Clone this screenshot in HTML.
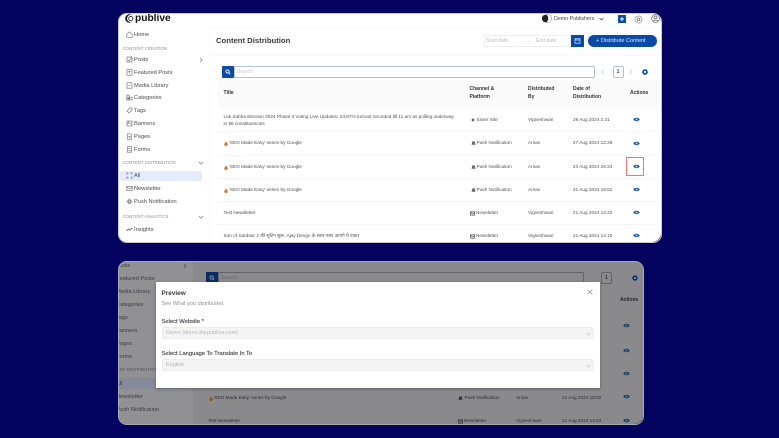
<!DOCTYPE html>
<html><head><meta charset="utf-8">
<style>
html,body{margin:0;padding:0;width:779px;height:438px;overflow:hidden;background:#03035f}
body{position:relative;font-family:"Liberation Sans","Noto Sans CJK SC",sans-serif;color:#333}
.layer{position:absolute;left:0;top:0;width:779px;height:438px;overflow:hidden;filter:blur(.3px)}
.b{position:absolute}
.t{position:absolute;white-space:nowrap;line-height:10px;height:10px}
.m{font-size:5.7px;color:#4a4a52;margin-top:.6px}
.s{font-size:4.2px;color:#8a8a90;letter-spacing:.12px}
.r{font-size:4.7px;color:#4f4f56}
.h{font-size:5px;font-weight:bold;color:#333}
svg{position:absolute;overflow:visible}
.ic{fill:none;stroke:#77777e;stroke-width:.7}
</style></head><body>

<!-- TOP WINDOW -->
<div class="layer" style="clip-path:inset(13px 118px 196px 118px round 9px)">
<div class="b" style="left:118px;top:13px;width:543px;height:229px;background:#fafafc"></div>
<div class="b" style="left:118px;top:13px;width:91px;height:229px;background:#fff"></div>
<div class="b" style="left:118px;top:13px;width:543px;height:14px;background:#fff"></div>
<div class="b" style="left:210px;top:28px;width:451px;height:26px;background:#fff;border-radius:3px 0 0 0"></div>
<div class="b" style="left:210px;top:56px;width:451px;height:186px;background:#fff;border-radius:3px 0 0 0"></div>

<!-- logo -->
<svg style="left:125px;top:14px" width="10" height="9" viewBox="0 0 10 9"><circle cx="4.4" cy="4.5" r="4.2" fill="#111"/><circle cx="5.6" cy="4.5" r="3.6" fill="#fff"/><circle cx="5.8" cy="4.5" r="2.1" fill="none" stroke="#222" stroke-width=".9"/></svg>
<div class="t" style="left:135px;top:12.5px;font-size:10.2px;font-weight:bold;color:#111;line-height:11px;height:11px">publive</div>

<!-- sidebar icons -->
<svg class="ic" style="left:126px;top:31px" width="7" height="7" viewBox="0 0 7 7"><path d="M.8 3.4 3.5.8l2.7 2.6v2.9H.8z"/></svg>
<svg class="ic" style="left:126px;top:56px" width="7" height="7" viewBox="0 0 7 7"><rect x="1" y="1" width="5" height="5"/><path d="M2 4l1 1 3-4"/></svg>
<svg class="ic" style="left:126px;top:69px" width="7" height="7" viewBox="0 0 7 7"><rect x="1" y=".7" width="5" height="5.6"/><path d="M2.3 2.5h2.4M3.5 2.5v2"/></svg>
<svg class="ic" style="left:126px;top:82px" width="7" height="7" viewBox="0 0 7 7"><rect x="1" y=".8" width="5" height="5.4"/><path d="M2.5 3.5h2"/></svg>
<svg class="ic" style="left:126px;top:94px" width="7" height="7" viewBox="0 0 7 7"><path d="M.8 1h2.4v2.4H.8zM3.8 3.2h2.4v2.6H3.8zM.8 4.4h2.2v1.6H.8z"/></svg>
<svg class="ic" style="left:126px;top:107px" width="7" height="7" viewBox="0 0 7 7"><path d="M4 1h2v2L3 6 1 4z"/></svg>
<svg class="ic" style="left:126px;top:120px" width="7" height="7" viewBox="0 0 7 7"><rect x="1" y="1" width="5" height="5"/><path d="M1 4l2-1.5 3 2M2 2h1"/></svg>
<svg class="ic" style="left:126px;top:133px" width="7" height="7" viewBox="0 0 7 7"><path d="M1.3.8h3l1.4 1.500v4H1.3zM2.500 3.500h2.200M2.500 4.800h2.200"/></svg>
<svg class="ic" style="left:126px;top:146px" width="7" height="7" viewBox="0 0 7 7"><rect x="1.3" y=".8" width="4.4" height="5.4"/><path d="M2.5 2.5h2M2.5 4.500h2"/></svg>
<svg class="ic" style="left:126px;top:185px" width="7" height="7" viewBox="0 0 7 7"><rect x=".8" y="1.3" width="5.4" height="4.4"/><path d="M.8 2l2.7 2L6.2 2"/></svg>
<svg class="ic" style="left:126px;top:198px" width="7" height="7" viewBox="0 0 7 7"><path d="M1 3.5 3.5 1 6 3.500 3.500 6z"/><circle cx="3.5" cy="3.5" r=".9"/></svg>
<svg class="ic" style="left:126px;top:226px;stroke:#444" width="7" height="7" viewBox="0 0 7 7"><path d="M.6 5 2.5 3l1.300 1L6.400 2"/></svg>

<div class="b" style="left:120px;top:170.5px;width:82px;height:10.5px;background:#e3ecf8;border-radius:2px"></div>
<svg class="ic" style="left:126px;top:172px;stroke:#4a6ea8" width="7" height="7" viewBox="0 0 7 7"><path d="M1 2.5V1h1.500M4.500 1H6v1.500M1 4.500V6h1.500M4.500 6H6V4.500"/></svg>

<div class="t m" style="left:134px;top:29px">Home</div>
<div class="t s" style="left:122.5px;top:44px">CONTENT CREATION</div>
<div class="t m" style="left:134px;top:54px">Posts</div>
<svg class="ic" style="left:199px;top:57px" width="4" height="6" viewBox="0 0 4 6"><path d="M1 .8 3 3 1 5.2"/></svg>
<div class="t m" style="left:134px;top:67px">Featured Posts</div>
<div class="t m" style="left:134px;top:80px">Media Library</div>
<div class="t m" style="left:134px;top:92.5px">Categories</div>
<div class="t m" style="left:134px;top:105px">Tags</div>
<div class="t m" style="left:134px;top:118px">Banners</div>
<div class="t m" style="left:134px;top:131px">Pages</div>
<div class="t m" style="left:134px;top:144px">Forms</div>
<div class="t s" style="left:122.5px;top:158px">CONTENT DISTRIBUTION</div>
<svg class="ic" style="left:198px;top:161px" width="6" height="4" viewBox="0 0 6 4"><path d="M.8 1 3 3 5.2 1"/></svg>
<div class="t m" style="left:134px;top:170px;color:#33507f">All</div>
<div class="t m" style="left:134px;top:183px">Newsletter</div>
<div class="t m" style="left:134px;top:196px">Push Notification</div>
<div class="t s" style="left:122.5px;top:212px">CONTENT ANALYTICS</div>
<svg class="ic" style="left:198px;top:215px" width="6" height="4" viewBox="0 0 6 4"><path d="M.8 1 3 3 5.2 1"/></svg>
<div class="t m" style="left:134px;top:224.5px">Insights</div>

<!-- topbar -->
<svg style="left:542.500px;top:14px" width="9" height="9" viewBox="0 0 9 9"><circle cx="4.5" cy="4.5" r="4" fill="#fff" stroke="#888" stroke-width=".6"/><path d="M3.5.8a3.8 3.8 0 1 0 0 7.400 4.800 4.800 0 0 0 0-7.400z" fill="#222"/></svg>
<div class="t" style="left:554px;top:13.5px;font-size:5.3px;color:#444">Demo Publishers</div>
<svg class="ic" style="left:599px;top:17px;stroke:#444" width="5" height="4" viewBox="0 0 5 4"><path d="M.6 1 2.500 3 4.400 1"/></svg>
<div class="b" style="left:618px;top:15px;width:8px;height:8px;background:#0c4aa8"></div>
<svg style="left:618px;top:15px" width="8" height="8" viewBox="0 0 8 8"><path d="M4 2v4M2 4h4" stroke="#fff" stroke-width=".9"/></svg>
<svg class="ic" style="left:634px;top:14.5px;stroke:#666" width="9" height="9" viewBox="0 0 9 9"><circle cx="4.5" cy="4.5" r="3.5" stroke-dasharray="1.500 .5"/><circle cx="4.5" cy="4.5" r="1.4"/></svg>
<svg class="ic" style="left:650.5px;top:14px;stroke:#666" width="9" height="9" viewBox="0 0 9 9"><circle cx="4.5" cy="4.5" r="3.9"/><circle cx="4.5" cy="3.5" r="1.5"/><path d="M2 7.300c.6-1.500 4.400-1.500 5 0"/></svg>

<!-- header -->
<div class="t" style="left:216px;top:36px;font-size:7.7px;font-weight:bold;color:#3a3a40">Content Distribution</div>
<div class="b" style="left:484px;top:35px;width:87px;height:12px;background:#fff;border:.5px solid #eceef2;box-sizing:border-box"></div>
<div class="t" style="left:486px;top:36px;font-size:5.1px;color:#bbb">Start date</div>
<div class="t" style="left:526px;top:36px;font-size:5.1px;color:#bbb">→</div>
<div class="t" style="left:536px;top:36px;font-size:5.1px;color:#bbb">End date</div>
<div class="b" style="left:571px;top:35px;width:13px;height:12px;background:#0c4aa8"></div>
<svg style="left:574px;top:38px;fill:none;stroke:#dbe6f5;stroke-width:.7" width="7" height="6" viewBox="0 0 7 6"><rect x="1" y=".8" width="5" height="4.4"/><path d="M1 2h5"/></svg>
<div class="b" style="left:587.5px;top:35px;width:69.5px;height:12px;background:#0c4aa8;border-radius:6px"></div>
<div class="t" style="left:596px;top:36px;font-size:5.6px;color:#dfe8f6">+ Distribute Content</div>

<!-- search -->
<div class="b" style="left:222px;top:66px;width:11.5px;height:12px;background:#0c4aa8;border-radius:1px"></div>
<svg style="left:225px;top:69px;fill:none;stroke:#fff;stroke-width:.9" width="6" height="6" viewBox="0 0 6 6"><circle cx="2.5" cy="2.5" r="1.6"/><path d="M3.8 3.8 5.2 5.2"/></svg>
<div class="b" style="left:234px;top:66px;width:360.5px;height:12px;box-sizing:border-box;border:.8px solid #b4c3da;border-radius:1.5px;background:#fff"></div>
<div class="t" style="left:237px;top:67px;font-size:5px;color:#c6c6cc">Search</div>
<svg class="ic" style="left:601px;top:69px;stroke:#c8c8cf" width="4" height="6" viewBox="0 0 4 6"><path d="M3 .8 1 3 3 5.2"/></svg>
<div class="b" style="left:612.5px;top:66px;width:11px;height:12px;box-sizing:border-box;border:.8px solid #b4c3da;border-radius:2px;background:#fff"></div>
<div class="t" style="left:612.5px;width:11px;text-align:center;top:67px;font-size:5px;font-weight:bold;color:#34456a">1</div>
<svg class="ic" style="left:629px;top:69px;stroke:#c8c8cf" width="4" height="6" viewBox="0 0 4 6"><path d="M1 .8 3 3 1 5.2"/></svg>
<svg style="left:642px;top:68.5px" width="6" height="6" viewBox="0 0 6 6"><circle cx="3" cy="3" r="1.9" fill="none" stroke="#0c4aa8" stroke-width="1.5"/><circle cx="3" cy="3" r="2.6" fill="none" stroke="#0c4aa8" stroke-width=".6" stroke-dasharray=".9 .9"/></svg>

<!-- table header -->
<div class="b" style="left:218px;top:80px;width:439px;height:28px;background:#fafafb"></div>
<div class="t h" style="left:223.5px;top:88px">Title</div>
<div class="t h" style="left:469.5px;top:84px">Channel &amp;</div>
<div class="t h" style="left:469.5px;top:92px">Platform</div>
<div class="t h" style="left:528px;top:84px">Distributed</div>
<div class="t h" style="left:528px;top:92px">By</div>
<div class="t h" style="left:573px;top:84px">Date of</div>
<div class="t h" style="left:573px;top:92px">Distribution</div>
<div class="t h" style="left:630px;top:88px">Actions</div>

<!-- rows -->
<div class="t r" style="left:223.5px;top:111.5px">Lok Sabha Election 2024 Phase 4 Voting Live Updates: 24.87% turnout recorded till 11 am as polling underway</div>
<div class="t r" style="left:223.5px;top:118.5px">in 96 constituencies</div>
<div class="t r" style="left:476.5px;top:114.5px">Sister Site</div>
<div class="t r" style="left:528px;top:114.5px">Vigneshwari</div>
<div class="t r" style="left:573px;top:114.5px">28 Aug 2024 2:31</div>
<svg style="left:470.5px;top:117.5px" width="4" height="4" viewBox="0 0 4 4"><path d="M2 .2 3.8 2 2 3.800.2 2z" fill="#666"/></svg>

<div class="b" style="left:218px;top:131px;width:439px;height:.5px;background:#f5f5f7"></div>
<div class="b" style="left:218px;top:155px;width:439px;height:.5px;background:#f5f5f7"></div>
<div class="b" style="left:218px;top:178px;width:439px;height:.5px;background:#f5f5f7"></div>
<div class="b" style="left:218px;top:201px;width:439px;height:.5px;background:#f5f5f7"></div>
<div class="b" style="left:218px;top:224px;width:439px;height:.5px;background:#f5f5f7"></div>

<svg style="left:224px;top:141px" width="4" height="5" viewBox="0 0 4 5"><path d="M2 .2C2.500 1.500 3.800 2 3.800 3.400A1.800 1.600 0 0 1 .2 3.400C.2 2.200 1.500 1.600 2 .2z" fill="#d9822b"/></svg>
<div class="t r" style="left:229px;top:138px">'SEO Made Easy' series by Google</div>
<svg style="left:470.5px;top:141px" width="5" height="4" viewBox="0 0 5 4"><path d="M1.500.3h2l1 3.400H.5z" fill="#666"/></svg>
<div class="t r" style="left:476.5px;top:138px">Push Notification</div>
<div class="t r" style="left:528px;top:138px">Arnav</div>
<div class="t r" style="left:573px;top:138px">27 Aug 2024 12:29</div>

<svg style="left:224px;top:164.5px" width="4" height="5" viewBox="0 0 4 5"><path d="M2 .2C2.500 1.500 3.800 2 3.800 3.400A1.800 1.600 0 0 1 .2 3.400C.2 2.200 1.500 1.600 2 .2z" fill="#d9822b"/></svg>
<div class="t r" style="left:229px;top:162px">'SEO Made Easy' series by Google</div>
<svg style="left:470.5px;top:164.5px" width="5" height="4" viewBox="0 0 5 4"><path d="M1.500.3h2l1 3.400H.5z" fill="#666"/></svg>
<div class="t r" style="left:476.5px;top:162px">Push Notification</div>
<div class="t r" style="left:528px;top:162px">Arnav</div>
<div class="t r" style="left:573px;top:162px">23 Aug 2024 16:23</div>

<svg style="left:224px;top:187.5px" width="4" height="5" viewBox="0 0 4 5"><path d="M2 .2C2.500 1.500 3.800 2 3.800 3.400A1.800 1.600 0 0 1 .2 3.400C.2 2.200 1.500 1.600 2 .2z" fill="#d9822b"/></svg>
<div class="t r" style="left:229px;top:185px">'SEO Made Easy' series by Google</div>
<svg style="left:470.5px;top:187.5px" width="5" height="4" viewBox="0 0 5 4"><path d="M1.500.3h2l1 3.400H.5z" fill="#666"/></svg>
<div class="t r" style="left:476.5px;top:185px">Push Notification</div>
<div class="t r" style="left:528px;top:185px">Arnav</div>
<div class="t r" style="left:573px;top:185px">21 Aug 2024 18:52</div>

<div class="t r" style="left:223.5px;top:208px">Test Newsletter</div>
<svg class="ic" style="left:469.5px;top:210.5px;stroke:#555" width="5" height="5" viewBox="0 0 5 5"><rect x=".4" y=".8" width="4.2" height="3.4"/><path d="M.4 1.200 2.500 3l2.100-1.800"/></svg>
<div class="t r" style="left:476px;top:208px">Newsletter</div>
<div class="t r" style="left:528px;top:208px">Vigneshwari</div>
<div class="t r" style="left:573px;top:208px">21 Aug 2024 14:22</div>

<div class="t r" style="left:223.5px;top:231px">Son of Sardaar 2 की शूटिंग शुरू, Ajay Devgn के साथ नजर आएंगे ये एक्टर</div>
<svg class="ic" style="left:469.5px;top:233.5px;stroke:#555" width="5" height="5" viewBox="0 0 5 5"><rect x=".4" y=".8" width="4.2" height="3.4"/><path d="M.4 1.200 2.500 3l2.100-1.800"/></svg>
<div class="t r" style="left:476px;top:231px">Newsletter</div>
<div class="t r" style="left:528px;top:231px">Vigneshwari</div>
<div class="t r" style="left:573px;top:231px">21 Aug 2024 14:19</div>

<!-- eyes -->
<svg style="left:632.5px;top:116.5px" width="7" height="5" viewBox="0 0 7 5"><path d="M.2 2.500C1.500.2 5.500.2 6.800 2.500 5.500 4.800 1.500 4.800.2 2.500z" fill="#1d5fa8"/><circle cx="3.5" cy="2.5" r=".9" fill="#cfe0f2"/></svg>
<svg style="left:632.5px;top:140.5px" width="7" height="5" viewBox="0 0 7 5"><path d="M.2 2.500C1.500.2 5.500.2 6.800 2.500 5.500 4.800 1.500 4.800.2 2.500z" fill="#1d5fa8"/><circle cx="3.5" cy="2.5" r=".9" fill="#cfe0f2"/></svg>
<svg style="left:632.5px;top:163.5px" width="7" height="5" viewBox="0 0 7 5"><path d="M.2 2.500C1.500.2 5.500.2 6.800 2.500 5.500 4.800 1.500 4.800.2 2.500z" fill="#1d5fa8"/><circle cx="3.5" cy="2.5" r=".9" fill="#cfe0f2"/></svg>
<svg style="left:632.5px;top:186.5px" width="7" height="5" viewBox="0 0 7 5"><path d="M.2 2.500C1.500.2 5.500.2 6.800 2.500 5.500 4.800 1.500 4.800.2 2.500z" fill="#1d5fa8"/><circle cx="3.5" cy="2.5" r=".9" fill="#cfe0f2"/></svg>
<svg style="left:632.5px;top:209.5px" width="7" height="5" viewBox="0 0 7 5"><path d="M.2 2.500C1.500.2 5.500.2 6.800 2.500 5.500 4.800 1.500 4.800.2 2.500z" fill="#1d5fa8"/><circle cx="3.5" cy="2.5" r=".9" fill="#cfe0f2"/></svg>
<svg style="left:632.5px;top:233px" width="7" height="5" viewBox="0 0 7 5"><path d="M.2 2.500C1.500.2 5.500.2 6.800 2.500 5.500 4.800 1.500 4.800.2 2.500z" fill="#1d5fa8"/><circle cx="3.5" cy="2.5" r=".9" fill="#cfe0f2"/></svg>
<div class="b" style="left:626px;top:157px;width:17.5px;height:18.5px;box-sizing:border-box;border:1.5px solid #e8767c"></div>
</div>
<div class="b" style="left:117.5px;top:12.5px;width:544px;height:230px;box-sizing:border-box;border:1px solid #c9c9d6;border-radius:9px"></div>

<!-- BOTTOM WINDOW -->
<div class="layer" style="clip-path:inset(261px 136px 14px 118px round 9px)">
<div class="b" style="left:118px;top:261px;width:525px;height:164px;background:#8a8a8d"></div>
<div class="b" style="left:118px;top:261px;width:75px;height:164px;background:#919194"></div>
<div class="b" style="left:118px;top:378px;width:64px;height:10.5px;background:#858a98"></div>

<div class="t m" style="left:116px;top:260px;color:#3d3d42">Posts</div>
<svg class="ic" style="left:183px;top:263px;stroke:#444" width="4" height="6" viewBox="0 0 4 6"><path d="M1 .8 3 3 1 5.2"/></svg>
<div class="t m" style="left:116px;top:273px;color:#3d3d42">Featured Posts</div>
<div class="t m" style="left:116px;top:286px;color:#3d3d42">Media Library</div>
<div class="t m" style="left:116px;top:299px;color:#3d3d42">Categories</div>
<div class="t m" style="left:116px;top:312px;color:#3d3d42">Tags</div>
<div class="t m" style="left:116px;top:325px;color:#3d3d42">Banners</div>
<div class="t m" style="left:116px;top:338px;color:#3d3d42">Pages</div>
<div class="t m" style="left:116px;top:351px;color:#3d3d42">Forms</div>
<div class="t s" style="left:104.5px;top:365px;color:#4f4f55">CONTENT DISTRIBUTION</div>
<div class="t m" style="left:116px;top:378px;color:#2f3b55">All</div>
<div class="t m" style="left:116px;top:391px;color:#3d3d42">Newsletter</div>
<div class="t m" style="left:116.500px;top:404px;color:#3d3d42">Push Notification</div>

<div class="b" style="left:206px;top:272px;width:11.5px;height:12px;background:#0a2d66"></div>
<svg style="left:209px;top:275px;fill:none;stroke:#8b98ad;stroke-width:.9" width="6" height="6" viewBox="0 0 6 6"><circle cx="2.5" cy="2.5" r="1.6"/><path d="M3.8 3.8 5.2 5.2"/></svg>
<div class="b" style="left:218px;top:272px;width:366px;height:12px;box-sizing:border-box;border:.8px solid #5f646d;border-radius:1.5px"></div>
<div class="t" style="left:221px;top:273px;font-size:5px;color:#6c6c70">Search</div>
<div class="b" style="left:601px;top:272px;width:11px;height:12px;box-sizing:border-box;border:.8px solid #5f646d;border-radius:2px"></div>
<div class="t" style="left:601px;width:11px;text-align:center;top:273px;font-size:5px;font-weight:bold;color:#2a2a30">1</div>
<svg style="left:632px;top:275px" width="6" height="6" viewBox="0 0 6 6"><circle cx="3" cy="3" r="1.9" fill="none" stroke="#0a2d66" stroke-width="1.500"/></svg>
<div class="t h" style="left:620px;top:295px;color:#26262a">Actions</div>

<svg style="left:209px;top:396px" width="4" height="5" viewBox="0 0 4 5"><path d="M2 .2C2.500 1.500 3.800 2 3.800 3.400A1.800 1.600 0 0 1 .2 3.400C.2 2.200 1.500 1.600 2 .2z" fill="#8a5a20"/></svg>
<div class="t r" style="left:213.5px;top:393px;color:#2e2e33">'SEO Made Easy' series by Google</div>
<svg style="left:458px;top:396px" width="5" height="4" viewBox="0 0 5 4"><path d="M1.500.3h2l1 3.400H.5z" fill="#333"/></svg>
<div class="t r" style="left:464.5px;top:393px;color:#2e2e33">Push Notification</div>
<div class="t r" style="left:516px;top:393px;color:#2e2e33">Arnav</div>
<div class="t r" style="left:562px;top:393px;color:#2e2e33">21 Aug 2024 18:52</div>
<div class="t r" style="left:208px;top:416px;color:#2e2e33">Test Newsletter</div>
<svg class="ic" style="left:457.5px;top:418.5px;stroke:#333" width="5" height="5" viewBox="0 0 5 5"><rect x=".4" y=".8" width="4.2" height="3.4"/><path d="M.4 1.200 2.500 3l2.100-1.800"/></svg>
<div class="t r" style="left:464px;top:416px;color:#2e2e33">Newsletter</div>
<div class="t r" style="left:516px;top:416px;color:#2e2e33">Vigneshwari</div>
<div class="t r" style="left:562px;top:416px;color:#2e2e33">21 Aug 2024 14:22</div>

<svg style="left:622.5px;top:323px" width="7" height="5" viewBox="0 0 7 5"><path d="M.2 2.500C1.500.2 5.500.2 6.800 2.500 5.500 4.800 1.500 4.800.2 2.500z" fill="#15406f"/><circle cx="3.5" cy="2.5" r=".9" fill="#78899b"/></svg>
<svg style="left:622.5px;top:347.5px" width="7" height="5" viewBox="0 0 7 5"><path d="M.2 2.500C1.500.2 5.500.2 6.800 2.500 5.500 4.800 1.500 4.800.2 2.500z" fill="#15406f"/><circle cx="3.5" cy="2.5" r=".9" fill="#78899b"/></svg>
<svg style="left:622.5px;top:370.5px" width="7" height="5" viewBox="0 0 7 5"><path d="M.2 2.500C1.500.2 5.500.2 6.800 2.500 5.500 4.800 1.500 4.800.2 2.500z" fill="#15406f"/><circle cx="3.5" cy="2.5" r=".9" fill="#78899b"/></svg>
<svg style="left:622.5px;top:394px" width="7" height="5" viewBox="0 0 7 5"><path d="M.2 2.500C1.500.2 5.500.2 6.800 2.500 5.500 4.800 1.500 4.800.2 2.500z" fill="#15406f"/><circle cx="3.5" cy="2.5" r=".9" fill="#78899b"/></svg>
<svg style="left:622.5px;top:417.5px" width="7" height="5" viewBox="0 0 7 5"><path d="M.2 2.500C1.500.2 5.500.2 6.800 2.500 5.500 4.800 1.500 4.800.2 2.500z" fill="#15406f"/><circle cx="3.5" cy="2.5" r=".9" fill="#78899b"/></svg>

<!-- modal -->
<div class="b" style="left:156px;top:281.5px;width:444px;height:106px;background:#fff;box-shadow:0 1px 3px rgba(0,0,0,.3)"></div>
<div class="t" style="left:161.5px;top:289px;font-size:6.4px;font-weight:bold;color:#3b3b40">Preview</div>
<div class="t" style="left:161.5px;top:299px;font-size:5.5px;color:#8d8d92">See What you distributed.</div>
<svg style="left:586.5px;top:288.5px;fill:none;stroke:#8d8d92;stroke-width:.7" width="6" height="6" viewBox="0 0 6 6"><path d="M.6.6 5.400 5.400M5.400.6.600 5.400"/></svg>
<div class="t" style="left:161.5px;top:316.5px;font-size:5.8px;color:#46464b;-webkit-text-stroke:.15px #46464b">Select Website *</div>
<div class="b" style="left:162px;top:327px;width:431.5px;height:12px;background:#f4f4f5;border:.5px solid #ececee;border-radius:2px;box-sizing:border-box"></div>
<div class="t" style="left:166px;top:328px;font-size:5.5px;color:#b4b4b8">Demo (demo.thepublive.com)</div>
<svg class="ic" style="left:585.5px;top:331.5px;stroke:#c2c2c6" width="5" height="4" viewBox="0 0 5 4"><path d="M.6 1 2.500 3 4.400 1"/></svg>
<div class="t" style="left:161.5px;top:348.5px;font-size:5.8px;color:#46464b;-webkit-text-stroke:.15px #46464b">Select Language To Translate In To</div>
<div class="b" style="left:162px;top:359px;width:431.5px;height:12px;background:#f4f4f5;border:.5px solid #ececee;border-radius:2px;box-sizing:border-box"></div>
<div class="t" style="left:166px;top:360px;font-size:5.5px;color:#b4b4b8">English</div>
<svg class="ic" style="left:585.5px;top:363.5px;stroke:#c2c2c6" width="5" height="4" viewBox="0 0 5 4"><path d="M.6 1 2.500 3 4.400 1"/></svg>
</div>
<div class="b" style="left:117.5px;top:260.5px;width:526px;height:164px;box-sizing:border-box;border:1px solid #a9a9b0;border-radius:9px"></div>

</body></html>
